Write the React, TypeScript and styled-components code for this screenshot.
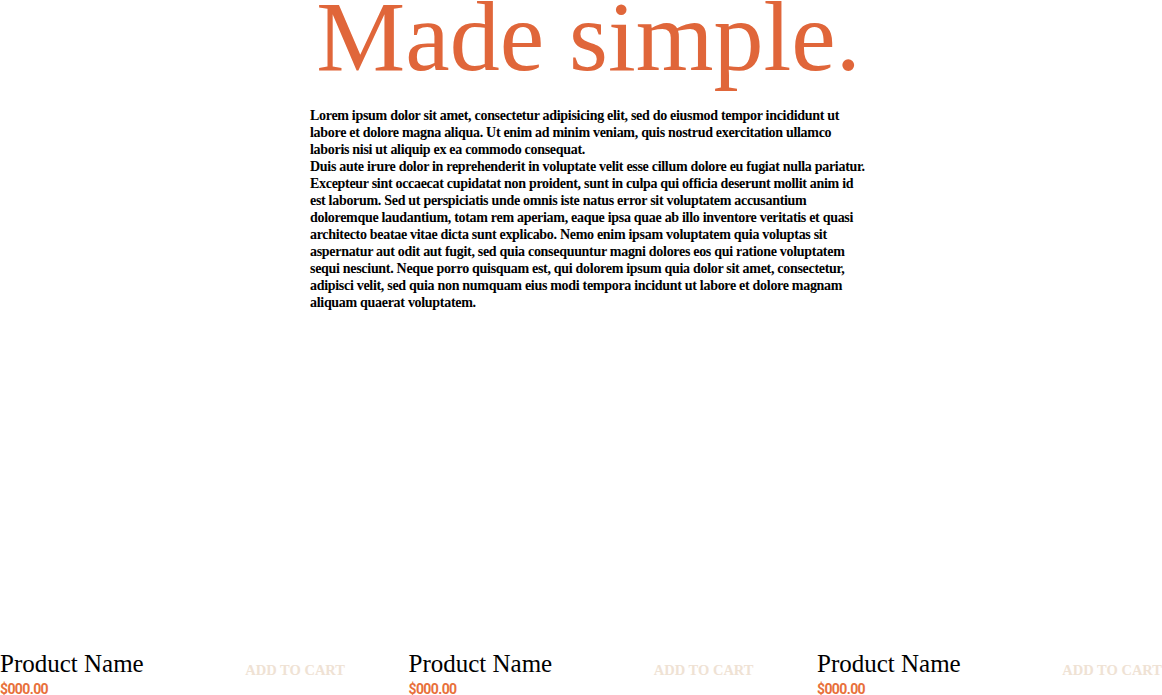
import React from 'react'
import styled, { createGlobalStyle } from 'styled-components'

const GlobalStyle = createGlobalStyle`
  html, body {
    margin: 0;
    padding: 0;
    background: #fff;
  }
  body {
    font-family: 'Liberation Serif', 'Times New Roman', serif;
    color: #000;
  }
`

const Page = styled.main`
  width: 100%;
`

const Hero = styled.section`
  box-sizing: border-box;
  width: 867px;
  padding-left: 310px;
`

const Title = styled.h1`
  margin: 0;
  font-family: 'Liberation Serif', serif;
  font-weight: 400;
  font-size: 100px;
  line-height: 74px;
  text-align: center;
  color: #e0663a;
`

const Copy = styled.div`
  margin-top: 33px;
  font-family: 'Liberation Serif', serif;
  font-weight: 700;
  font-size: 14px;
  line-height: 17px;
  letter-spacing: -0.3px;
  white-space: nowrap;

  p {
    margin: 0;
  }
`

const Line = styled.span`
  display: block;
`

const Products = styled.section`
  display: flex;
  justify-content: space-between;
  margin-top: 338px;
`

const Product = styled.div`
  width: 345px;
  display: flex;
  flex-direction: column;
`

const ProductTop = styled.div`
  display: flex;
  justify-content: space-between;
  align-items: flex-end;
`

const ProductName = styled.h3`
  margin: 0;
  font-family: 'Liberation Serif', serif;
  font-weight: 400;
  font-size: 25px;
  line-height: 30px;
`

const AddToCart = styled.button`
  border: 0;
  background: none;
  padding: 0;
  font-family: 'Liberation Serif', serif;
  font-weight: 700;
  font-size: 14.5px;
  line-height: normal;
  color: #efe2d4;
  cursor: pointer;
`

const Price = styled.span`
  font-family: Roboto, 'Liberation Sans', sans-serif;
  font-weight: 700;
  font-size: 14px;
  line-height: 20px;
  letter-spacing: -0.6px;
  color: #e8703a;
`

const intro = [
  'Lorem ipsum dolor sit amet, consectetur adipisicing elit, sed do eiusmod tempor incididunt ut',
  'labore et dolore magna aliqua. Ut enim ad minim veniam, quis nostrud exercitation ullamco',
  'laboris nisi ut aliquip ex ea commodo consequat.',
]

const body = [
  'Duis aute irure dolor in reprehenderit in voluptate velit esse cillum dolore eu fugiat nulla pariatur.',
  'Excepteur sint occaecat cupidatat non proident, sunt in culpa qui officia deserunt mollit anim id',
  'est laborum. Sed ut perspiciatis unde omnis iste natus error sit voluptatem accusantium',
  'doloremque laudantium, totam rem aperiam, eaque ipsa quae ab illo inventore veritatis et quasi',
  'architecto beatae vitae dicta sunt explicabo. Nemo enim ipsam voluptatem quia voluptas sit',
  'aspernatur aut odit aut fugit, sed quia consequuntur magni dolores eos qui ratione voluptatem',
  'sequi nesciunt. Neque porro quisquam est, qui dolorem ipsum quia dolor sit amet, consectetur,',
  'adipisci velit, sed quia non numquam eius modi tempora incidunt ut labore et dolore magnam',
  'aliquam quaerat voluptatem.',
]

const products = [1, 2, 3].map((id) => ({ id, name: 'Product Name', price: '$000.00' }))

export default function App() {
  return (
    <Page>
      <GlobalStyle />
      <Hero>
        <Title>Made simple.</Title>
        <Copy>
          <p>
            {intro.map((l) => (
              <Line key={l}>{l}</Line>
            ))}
          </p>
          <p>
            {body.map((l) => (
              <Line key={l}>{l}</Line>
            ))}
          </p>
        </Copy>
      </Hero>
      <Products>
        {products.map((p) => (
          <Product key={p.id}>
            <ProductTop>
              <ProductName>{p.name}</ProductName>
              <AddToCart>ADD TO CART</AddToCart>
            </ProductTop>
            <Price>{p.price}</Price>
          </Product>
        ))}
      </Products>
    </Page>
  )
}
